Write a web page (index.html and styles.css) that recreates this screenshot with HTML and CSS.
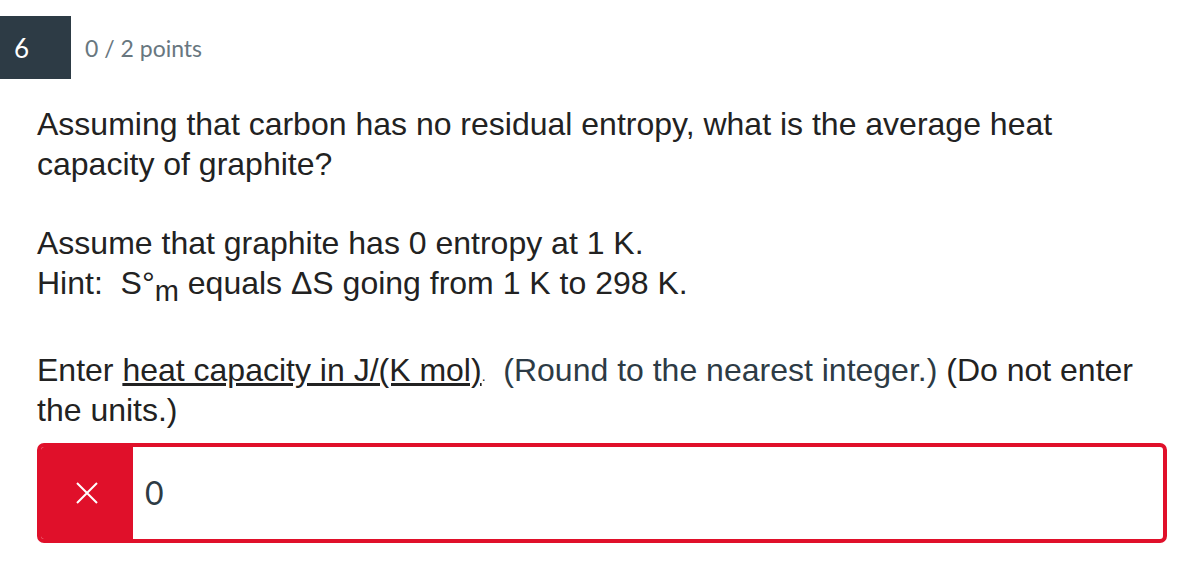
FILE: index.html
```html
<!DOCTYPE html>
<html>
<head>
<meta charset="utf-8">
<link rel="stylesheet" href="styles.css">
</head>
<body>
<div class="question">
  <div class="header">
    <div class="qnum">6</div>
    <div class="points">0 / 2 points</div>
  </div>
  <div class="body">
    <p>Assuming that carbon has no residual entropy, what is the average heat capacity of graphite?</p>
    <p>Assume that graphite has 0 entropy at 1 K.<br>Hint:&nbsp; S°<sub>m</sub> equals ΔS going from 1 K to 298 K.</p>
    <p>Enter <u>heat capacity in J/(K mol)</u><span class="dot">.</span>&nbsp; <span class="muted">(Round to the nearest integer.)</span> (Do not enter the units.)</p>
    <div class="answer">
      <div class="mark">
        <svg width="22" height="22" viewBox="0 0 22 22"><path d="M1 1 L21 21 M21 1 L1 21" stroke="#fff" stroke-width="2" fill="none"/></svg>
      </div>
      <div class="value">0</div>
    </div>
  </div>
</div>
</body>
</html>
```
FILE: styles.css
```css
html, body { margin: 0; padding: 0; background: #fff; }
.question { width: 1202px; }
.header { display: flex; align-items: center; margin-top: 16px; height: 63px; }
.qnum {
  width: 71px; height: 63px; background: #2d3b45; color: #fff;
  font-family: Lato, sans-serif; font-size: 26px;
  display: flex; align-items: center; padding-left: 14px; box-sizing: border-box;
}
.points { margin-left: 14px; font-family: Lato, sans-serif; font-size: 23px; color: #68777f; }
.body {
  padding: 25px 35px 0 37px;
  font-family: "Liberation Sans", Arial, sans-serif; font-size: 32px; line-height: 40px; color: #222;
}
.body p { margin: 0 0 39px 0; }
.body p:nth-child(3) { margin-bottom: 13px; }
sub { font-size: 29px; line-height: 40px; vertical-align: -7px; }
.dot { font-size: 14px; line-height: 0; }
.muted { color: #2d3b45; }
.answer {
  display: flex; height: 100px; box-sizing: border-box;
  border: 4px solid #e0102a; border-radius: 7px; overflow: hidden;
}
.mark { width: 92px; flex: none; background: #e0102a; display: flex; align-items: center; justify-content: center; }
.value { display: flex; align-items: center; padding-left: 12px; font-family: Lato, sans-serif; font-size: 32px; color: #2d3b45; }
```
